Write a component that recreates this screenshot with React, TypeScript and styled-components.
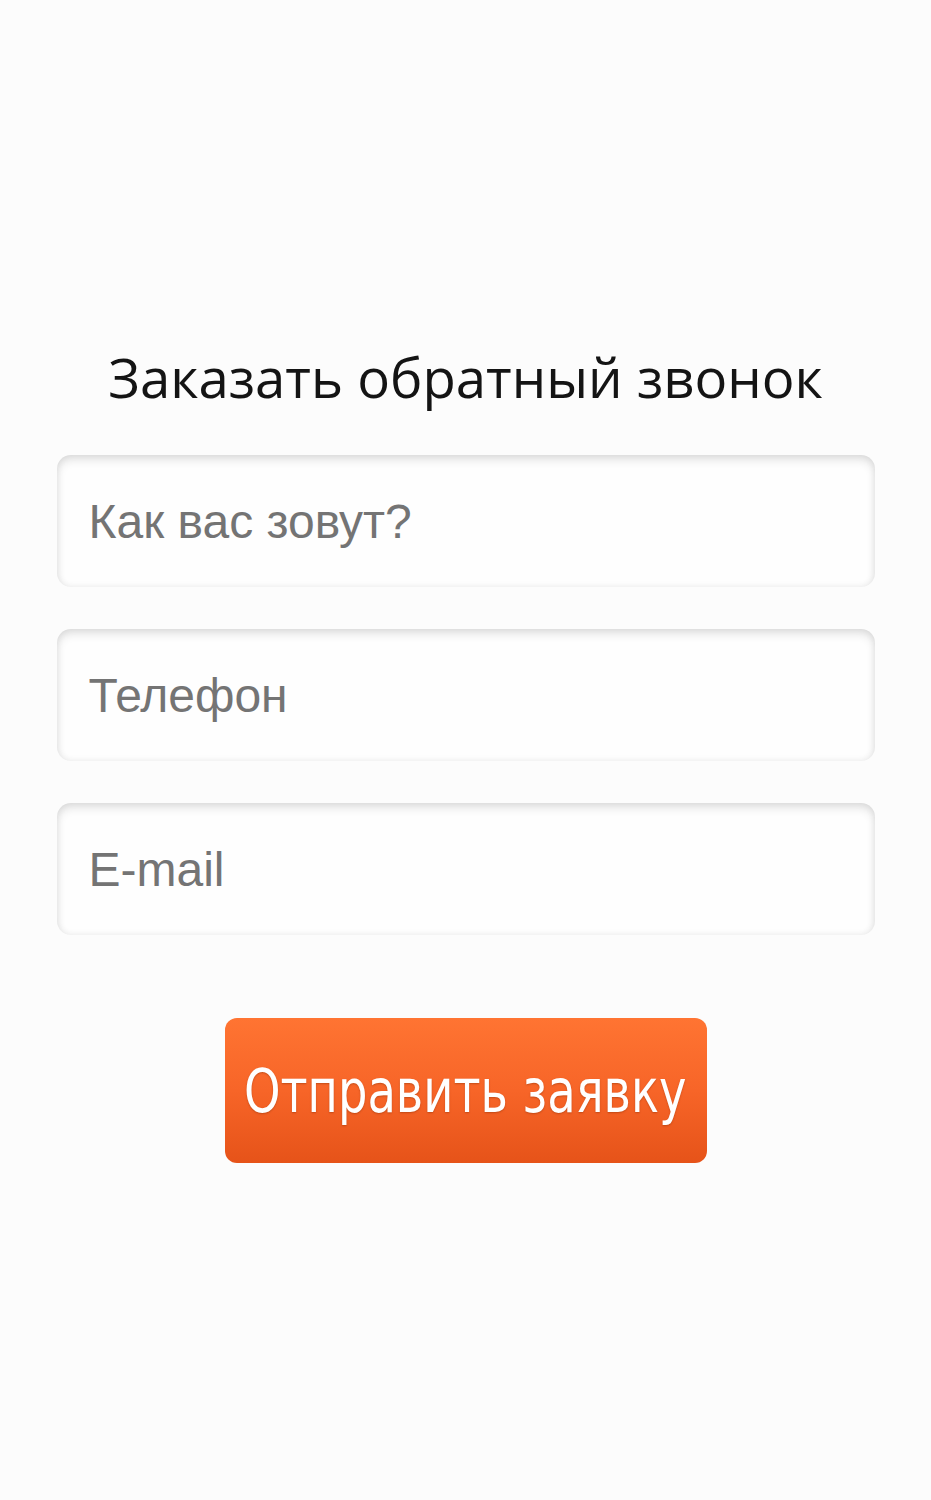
import React from "react";
import styled, { createGlobalStyle } from "styled-components";

const GlobalStyle = createGlobalStyle`
  html, body {
    margin: 0;
    padding: 0;
    background: #fcfcfc;
  }
  * {
    box-sizing: border-box;
  }
`;

const Page = styled.div`
  min-height: 1500px;
  padding-top: 340px;
  display: flex;
  justify-content: center;
`;

const Form = styled.form`
  width: 818px;
  display: flex;
  flex-direction: column;
  align-items: center;
`;

const Title = styled.h2`
  margin: 0 0 41px;
  font-family: "Open Sans", sans-serif;
  font-weight: 400;
  font-size: 54.5px;
  line-height: 74px;
  color: #141414;
  text-align: center;
  white-space: nowrap;
`;

const Field = styled.input`
  width: 100%;
  height: 132px;
  margin-bottom: 42px;
  padding: 0 32px;
  border: none;
  border-radius: 14px;
  background: #fefefe;
  box-shadow: inset 0 5px 10px rgba(0, 0, 0, 0.11), inset 0 0 7px rgba(0, 0, 0, 0.07);
  font-family: "Liberation Sans", Arial, sans-serif;
  font-size: 48px;
  color: #333;
  outline: none;

  &::placeholder {
    color: #747474;
  }
`;

const SubmitButton = styled.button`
  margin-top: 41px;
  width: 482px;
  height: 145px;
  padding: 0;
  display: flex;
  align-items: center;
  justify-content: center;
  border: none;
  border-radius: 12px;
  background: linear-gradient(to bottom, #ff7432 0%, #f76528 50%, #e65319 100%);
  color: #fff;
  font-family: "DejaVu Sans Condensed", "DejaVu Sans", sans-serif;
  font-size: 60px;
  white-space: nowrap;
  text-shadow: 0 1px 2px rgba(120, 40, 0, 0.4);
  cursor: pointer;
`;

const ButtonLabel = styled.span`
  display: inline-block;
  flex-shrink: 0;
  transform: scaleX(0.86);
`;

export default function App() {
  return (
    <>
      <GlobalStyle />
      <Page>
        <Form onSubmit={(e) => e.preventDefault()}>
          <Title>Заказать обратный звонок</Title>
          <Field type="text" placeholder="Как вас зовут?" />
          <Field type="tel" placeholder="Телефон" />
          <Field type="email" placeholder="E-mail" />
          <SubmitButton type="submit">
            <ButtonLabel>Отправить заявку</ButtonLabel>
          </SubmitButton>
        </Form>
      </Page>
    </>
  );
}
